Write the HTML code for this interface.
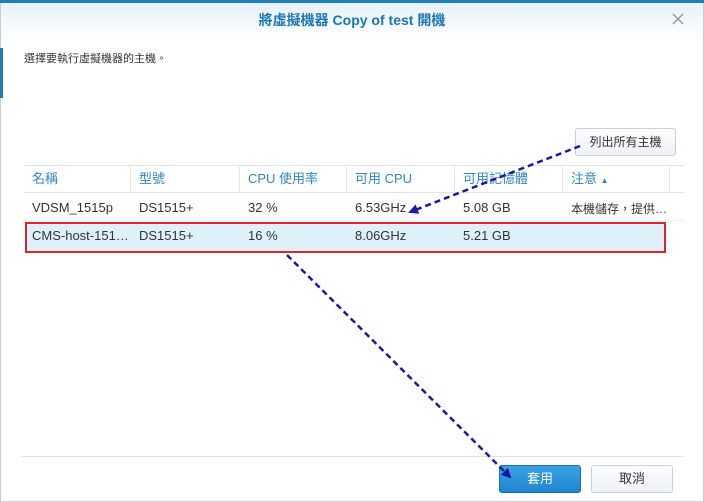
<!DOCTYPE html>
<html><head><meta charset="utf-8"><style>
body{margin:0;width:704px;height:502px;overflow:hidden;background:#fff;font-family:"Liberation Sans","Noto Sans CJK TC",sans-serif;position:relative}
.a{position:absolute}
.hdr{left:0;top:0;width:704px;height:40px;background:linear-gradient(#e6f1fa,#fff);border-top:3px solid #1f7fb8;box-sizing:border-box}
.title{left:0;width:704px;top:10px;text-align:center;color:#1a75b4;font-size:14px;font-weight:bold}
.th{top:165px;height:28px;line-height:28px;color:#2f86c2;font-size:13px;border-right:1px solid #e3e8ee;padding-left:8px;box-sizing:border-box}
.td{font-size:13px;color:#333;padding-left:8px;box-sizing:border-box}
</style></head><body>
<div class="a hdr"></div>
<div class="a" style="left:0;top:3px;width:1px;height:499px;background:#ccc"></div>
<div class="a" style="right:0;top:3px;width:1px;height:499px;background:#ccc"></div>
<div class="a" style="left:0;top:501px;width:704px;height:1px;background:#ccc"></div>
<div class="a title">將虛擬機器 Copy of test 開機</div>
<svg class="a" style="left:672px;top:13px" width="12" height="12"><path d="M1,1L11,11M11,1L1,11" stroke="#999" stroke-width="1.5"/></svg>
<div class="a" style="left:0;top:48px;width:3px;height:50px;background:#1f7fb8"></div>
<div class="a" style="left:24px;top:50px;font-size:11px;color:#333">選擇要執行虛擬機器的主機。</div>
<div class="a" style="left:575px;top:128px;width:101px;height:28px;border:1px solid #c8d0d8;border-radius:3px;background:linear-gradient(#fbfcfd,#eef2f5);box-sizing:border-box;text-align:center;line-height:26px;font-size:12px;color:#333">列出所有主機</div>
<div class="a" style="left:24px;top:165px;width:660px;height:1px;background:#dfe5ea"></div>
<div class="a" style="left:24px;top:192px;width:660px;height:1px;background:#dfe5ea"></div>
<div class="a th" style="left:24px;width:107px">名稱</div>
<div class="a th" style="left:131px;width:109px">型號</div>
<div class="a th" style="left:240px;width:107px">CPU 使用率</div>
<div class="a th" style="left:347px;width:108px">可用 CPU</div>
<div class="a th" style="left:455px;width:108px">可用記憶體</div>
<div class="a th" style="left:563px;width:107px">注意 <span style="font-size:8px">▲</span></div>
<div class="a" style="left:24px;top:220px;width:660px;height:1px;background:#eef1f4"></div>
<div class="a" style="left:25px;top:222px;width:641px;height:31px;background:#dff0fb;border:2px solid #d8262b;box-sizing:border-box"></div>
<div class="a td" style="left:24px;top:200px">VDSM_1515p</div>
<div class="a td" style="left:131px;top:200px">DS1515+</div>
<div class="a td" style="left:240px;top:200px">32 %</div>
<div class="a td" style="left:347px;top:200px">6.53GHz</div>
<div class="a td" style="left:455px;top:200px">5.08 GB</div>
<div class="a td" style="left:563px;top:200px;font-size:12px">本機儲存，提供…</div>
<div class="a td" style="left:24px;top:228px">CMS-host-151…</div>
<div class="a td" style="left:131px;top:228px">DS1515+</div>
<div class="a td" style="left:240px;top:228px">16 %</div>
<div class="a td" style="left:347px;top:228px">8.06GHz</div>
<div class="a td" style="left:455px;top:228px">5.21 GB</div>
<div class="a" style="left:22px;top:456px;width:661px;height:1px;background:#dde3e8"></div>
<div class="a" style="left:499px;top:465px;width:82px;height:28px;border:1px solid #1f6fb0;border-radius:3px;background:linear-gradient(#3aa2e6,#1f86d0);box-sizing:border-box;text-align:center;line-height:26px;font-size:13px;color:#fff">套用</div>
<div class="a" style="left:591px;top:465px;width:82px;height:28px;border:1px solid #c8d0d8;border-radius:3px;background:linear-gradient(#fbfcfd,#eef2f5);box-sizing:border-box;text-align:center;line-height:26px;font-size:13px;color:#333">取消</div>
<svg class="a" style="left:0;top:0" width="704" height="502">
<defs><marker id="m" markerUnits="userSpaceOnUse" markerWidth="10" markerHeight="10" refX="8" refY="5" orient="auto"><path d="M0,0L10,5L0,10z" fill="#1a1aa0"/></marker></defs>
<g stroke="#1a1aa0" stroke-width="2.5" stroke-dasharray="6,4" fill="none">
<line x1="580" y1="146" x2="410" y2="212" marker-end="url(#m)"/>
<line x1="287" y1="255" x2="510" y2="477" marker-end="url(#m)"/>
</g></svg>
</body></html>
